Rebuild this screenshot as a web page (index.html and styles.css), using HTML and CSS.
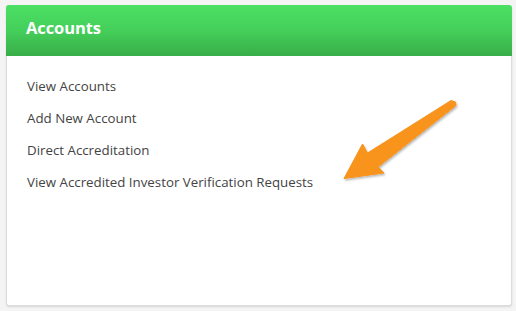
FILE: index.html
```html
<!DOCTYPE html>
<html>
<head>
<meta charset="utf-8">
<link rel="stylesheet" href="styles.css">
</head>
<body>
<div class="card">
  <div class="card-header"><h1 class="title">Accounts</h1></div>
  <ul class="links">
    <li><a class="link">View Accounts</a></li>
    <li><a class="link">Add New Account</a></li>
    <li><a class="link">Direct Accreditation</a></li>
    <li><a class="link">View Accredited Investor Verification Requests</a></li>
  </ul>
  <svg class="arrow" width="516" height="311" viewBox="0 0 516 311">
    <defs>
      <filter id="sh" x="-20%" y="-20%" width="140%" height="140%">
        <feDropShadow dx="1" dy="1.5" stdDeviation="1.2" flood-color="#000" flood-opacity="0.3"/>
      </filter>
    </defs>
    <polygon points="451,100.5 455.5,102 456,105.5 378,167 384,173 344,178.5 362.5,144 367.5,153" fill="#f8931c" filter="url(#sh)" stroke="#f8931c" stroke-width="1" stroke-linejoin="round"/>
  </svg>
</div>
</body>
</html>
```
FILE: styles.css
```css
html, body { margin: 0; padding: 0; }
body {
  background: #f4f4f4;
  width: 516px;
  height: 311px;
  padding: 5px 0 0 6px;
  box-sizing: border-box;
  font-family: "Open Sans", "Liberation Sans", sans-serif;
  overflow: hidden;
}
.card {
  position: relative;
  width: 506px;
  height: 301px;
  box-sizing: border-box;
  background: #fff;
  border: 1px solid #dcdcdc;
  border-top: none;
  border-radius: 3px;
  box-shadow: 0 1px 2px rgba(0,0,0,0.12);
}
.card-header {
  height: 51px;
  margin: 0 -1px;
  background: linear-gradient(to bottom, #4be064 0%, #44cf5a 50%, #39ad48 100%);
  border-radius: 3px 3px 0 0;
  display: flex;
  align-items: center;
  padding-left: 20px;
}
.title {
  margin: 0;
  color: #fff;
  font-size: 16.5px;
  font-weight: 700;
  letter-spacing: -0.1px;
  padding-bottom: 6px;
}
.links {
  list-style: none;
  margin: 0;
  padding: 13px 0 0 20px;
}
.links li {
  height: 32px;
  line-height: 32px;
}
.link {
  color: #444;
  font-size: 13.3px;
  letter-spacing: 0;
}
.arrow {
  position: absolute;
  left: -7px;
  top: -5px;
  pointer-events: none;
}
```
